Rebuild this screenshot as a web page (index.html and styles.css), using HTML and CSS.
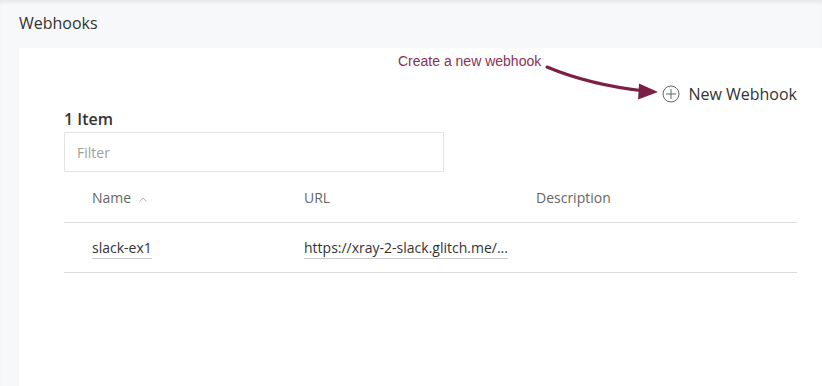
FILE: index.html
```html
<!DOCTYPE html>
<html lang="en">
<head>
  <meta charset="UTF-8" />
  <title>Webhooks</title>
  <link rel="stylesheet" href="styles.css">
</head>
<body>
  <div class="page">
    <h1 class="page-title">Webhooks</h1>

    <div class="card">
      <!-- Annotation -->
      <div class="callout">Create a new webhook</div>
      <svg class="callout-arrow" width="125" height="45" viewBox="0 0 125 45">
        <path d="M7 7 Q50 25 105 31" fill="none" stroke="#7b1f45" stroke-width="3" stroke-linecap="round" />
        <polygon points="118,32 99,23.5 98,39.5" fill="#7b1f45" />
      </svg>

      <div class="toolbar">
        <button class="new-btn">
          <svg width="18" height="18" viewBox="0 0 18 18">
            <circle cx="9" cy="9" r="8" fill="none" stroke="#666" stroke-width="1" />
            <path d="M9 4v10M4 9h10" stroke="#666" stroke-width="1" />
          </svg>
          New Webhook
        </button>
      </div>

      <div class="count">1 Item</div>
      <input class="filter" type="text" placeholder="Filter" />

      <div class="table">
        <div class="row head">
          <div class="cell">Name
            <svg class="sort" width="8" height="5" viewBox="0 0 8 5">
              <path d="M0.5 4.5 L4 1 L7.5 4.5" fill="none" stroke="#b5b5b5" stroke-width="1" />
            </svg>
          </div>
          <div class="cell">URL</div>
          <div class="cell">Description</div>
        </div>
        <div class="row">
          <div class="cell"><span class="link">slack-ex1</span></div>
          <div class="cell"><span class="link">https://xray-2-slack.glitch.me/...</span></div>
          <div class="cell"></div>
        </div>
      </div>
    </div>
  </div>
</body>
</html>
```

FILE: styles.css
```css
* {
  margin: 0;
  padding: 0;
  box-sizing: border-box;
}

body {
  background-color: #f7f8fa;
  font-family: 'Open Sans', sans-serif;
  color: #333;
  overflow: hidden;
}

.page {
  min-height: 386px;
  box-shadow: inset 0 4px 4px -2px rgba(0, 0, 0, 0.08);
  display: flex;
  flex-direction: column;
}

.page-title {
  font-size: 16px;
  font-weight: 400;
  color: #333;
  height: 48px;
  line-height: 46px;
  padding-left: 19px;
}

.card {
  position: relative;
  flex: 1;
  margin-left: 19px;
  background: #fff;
  padding: 0 25px 0 45px;
}

/* annotation over the toolbar */
.callout {
  position: absolute;
  left: 379px;
  top: 5px;
  font-family: 'Liberation Sans', Arial, sans-serif;
  font-size: 14px;
  line-height: 16px;
  color: #8c2f57;
}

.callout-arrow {
  position: absolute;
  left: 521px;
  top: 12px;
}

.toolbar {
  display: flex;
  justify-content: flex-end;
  height: 60px;
  padding-top: 35px;
}

.new-btn {
  display: flex;
  align-items: center;
  gap: 8px;
  height: 22px;
  border: none;
  background: none;
  font-family: 'Open Sans', sans-serif;
  font-size: 16px;
  color: #333;
}

.count {
  font-size: 16px;
  font-weight: 600;
  color: #333;
  line-height: 22px;
  margin-bottom: 2px;
}

.filter {
  display: block;
  width: 380px;
  height: 40px;
  border: 1px solid #e4e4e4;
  padding: 0 12px;
  font-family: 'Open Sans', sans-serif;
  font-size: 14px;
  color: #333;
  outline: none;
}

.filter::placeholder {
  color: #a0a0a0;
}

.table {
  width: 100%;
}

.row {
  display: grid;
  grid-template-columns: 212px 232px 1fr;
  height: 50px;
  align-items: center;
  border-bottom: 1px solid #dcdcdc;
  font-size: 14px;
}

.row .cell {
  padding-left: 28px;
  white-space: nowrap;
}

.row.head {
  height: 51px;
  color: #666;
  font-weight: 500;
}

.sort {
  margin-left: 4px;
  vertical-align: 1px;
}

.link {
  color: #333;
  border-bottom: 1px solid #ccc;
  padding-bottom: 1px;
}
```
